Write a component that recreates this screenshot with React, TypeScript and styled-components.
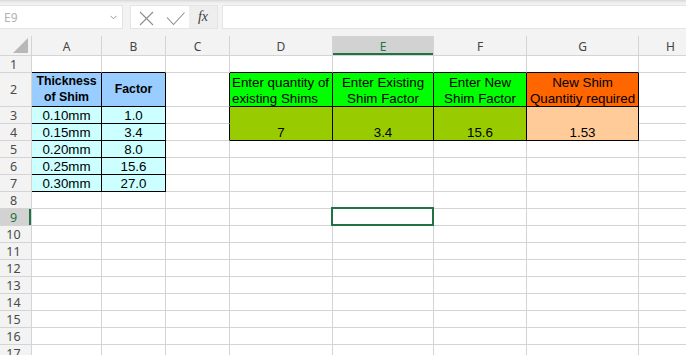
import React from 'react';
import styled, { createGlobalStyle } from 'styled-components';

const Global = createGlobalStyle`
  html, body { margin: 0; padding: 0; background: #ffffff; }
  body { width: 686px; height: 355px; overflow: hidden; }
  #root { width: 686px; height: 355px; }
`;

const GREEN = '#217346';
const GRID = '#d4d4d4';
const HEAD_BG = '#f3f3f3';

const Window = styled.div`
  width: 686px;
  height: 355px;
  overflow: hidden;
  background: ${HEAD_BG};
  display: flex;
  flex-direction: column;
`;

const FormulaBar = styled.div`
  flex: none;
  height: 36px;
  box-sizing: border-box;
  padding-top: 5px;
  display: flex;
  align-items: flex-start;
  background: linear-gradient(#d6d6d6 0px, #ebebeb 2px, ${HEAD_BG} 4px, ${HEAD_BG} 100%);
`;

const NameBox = styled.div`
  width: 123px;
  height: 24px;
  box-sizing: border-box;
  background: #ffffff;
  border: 1px solid #e4e4e4;
  border-left: none;
  display: flex;
  align-items: center;
  justify-content: space-between;
  padding: 0 5px 0 4px;
  font-family: 'Noto Sans', 'Liberation Sans', sans-serif;
  font-size: 12px;
  color: #b3b3b3;
`;

const FuncBox = styled.div`
  margin-left: 7px;
  width: 88px;
  height: 24px;
  box-sizing: border-box;
  border: 1px solid #e4e4e4;
  display: flex;
`;

const FuncIcons = styled.div`
  width: 58px;
  height: 100%;
  background: #ffffff;
  display: flex;
  align-items: center;
`;

const FxButton = styled.div`
  flex: 1;
  background: #eeeeee;
  display: flex;
  align-items: center;
  justify-content: center;
  font-family: 'Liberation Serif', 'DejaVu Serif', serif;
  font-style: italic;
  font-size: 14px;
  color: #3c3c3c;
`;

const FormulaInput = styled.div`
  margin-left: 4px;
  flex: 1;
  height: 24px;
  box-sizing: border-box;
  background: #ffffff;
  border: 1px solid #e4e4e4;
  border-right: none;
`;

const Sheet = styled.div`
  flex: none;
  display: grid;
  width: max-content;
  grid-template-columns: 32px 70px 64px 64px 103px 101px 93px 112px 64px;
  grid-template-rows: 20px 17px 34px repeat(15, 17px);
  background: #ffffff;
`;

const Corner = styled.div`
  grid-column: 1;
  grid-row: 1;
  background: ${HEAD_BG};
  border-right: 1px solid ${GRID};
  border-bottom: 1px solid ${GRID};
  box-sizing: border-box;
  display: flex;
  align-items: flex-end;
  justify-content: flex-end;
  padding: 0 3px 2px 0;
`;

const Triangle = styled.div`
  width: 0;
  height: 0;
  border-left: 15px solid transparent;
  border-bottom: 15px solid #b8b8b8;
`;

const ColHead = styled.div<{ $col: number; $active?: boolean }>`
  grid-column: ${(p) => p.$col};
  grid-row: 1;
  box-sizing: border-box;
  background: ${(p) => (p.$active ? '#d2d2d2' : HEAD_BG)};
  border-right: 1px solid ${GRID};
  border-bottom: 1px solid ${GRID};
  box-shadow: ${(p) => (p.$active ? `inset 0 -2px 0 ${GREEN}` : 'none')};
  display: flex;
  align-items: center;
  justify-content: center;
  font-family: 'Noto Sans', 'Liberation Sans', sans-serif;
  font-size: 12px;
  padding-top: 1px;
  color: ${(p) => (p.$active ? GREEN : '#444444')};
`;

const RowHead = styled.div<{ $row: number; $active?: boolean }>`
  grid-column: 1;
  grid-row: ${(p) => p.$row};
  box-sizing: border-box;
  background: ${(p) => (p.$active ? '#d2d2d2' : HEAD_BG)};
  border-right: 1px solid ${GRID};
  border-bottom: 1px solid ${GRID};
  box-shadow: ${(p) => (p.$active ? `inset -2px 0 0 ${GREEN}` : 'none')};
  display: flex;
  align-items: center;
  justify-content: center;
  padding-right: 4px;
  font-family: 'Noto Sans', 'Liberation Sans', sans-serif;
  font-size: 12.5px;
  color: ${(p) => (p.$active ? GREEN : '#4a4a4a')};
`;

const Cell = styled.div<{
  $col: number;
  $row: number;
  $span: number;
  $bg: string;
  $rb: string;
  $bb: string;
  $bold?: boolean;
  $align: 'left' | 'center';
  $valign: 'bottom' | 'middle';
}>`
  position: relative;
  grid-column: ${(p) => p.$col};
  grid-row: ${(p) => p.$row} / span ${(p) => p.$span};
  box-sizing: border-box;
  background: ${(p) => p.$bg};
  border-right: 1px solid ${(p) => p.$rb};
  border-bottom: 1px solid ${(p) => p.$bb};
  display: flex;
  flex-direction: column;
  justify-content: ${(p) => (p.$valign === 'middle' ? 'center' : 'flex-end')};
  align-items: ${(p) => (p.$align === 'center' ? 'center' : 'flex-start')};
  padding: 0 2px;
  font-family: 'Liberation Sans', Arial, sans-serif;
  font-size: ${(p) => (p.$bold ? '12.3px' : '13.33px')};
  line-height: 15.33px;
  font-weight: ${(p) => (p.$bold ? 700 : 400)};
  color: #000000;
  white-space: nowrap;
`;

const Line = styled.span<{ $align: 'left' | 'center' }>`
  display: block;
  text-align: ${(p) => p.$align};
`;

const Selection = styled.div`
  position: absolute;
  left: -2px;
  top: -2px;
  right: -1px;
  bottom: -1px;
  border: 2px solid ${GREEN};
  z-index: 2;
  pointer-events: none;
`;

const COLS = ['A', 'B', 'C', 'D', 'E', 'F', 'G', 'H'];
const ROWS = Array.from({ length: 17 }, (_, i) => i + 1);

type CellData = {
  text: string;
  bg: string;
  bold?: boolean;
  align?: 'left' | 'center';
  valign?: 'bottom' | 'middle';
  span?: number;
};

const BLUE = '#99ccff';
const CYAN = '#ccffff';
const LIME = '#00ff00';
const OLIVE = '#99cc00';
const ORANGE = '#ff6600';
const PEACH = '#ffcc99';

const DATA: Record<string, CellData> = {
  A2: { text: 'Thickness\nof Shim', bg: BLUE, bold: true, valign: 'middle' },
  B2: { text: 'Factor', bg: BLUE, bold: true, valign: 'middle' },
  A3: { text: '0.10mm', bg: CYAN },
  A4: { text: '0.15mm', bg: CYAN },
  A5: { text: '0.20mm', bg: CYAN },
  A6: { text: '0.25mm', bg: CYAN },
  A7: { text: '0.30mm', bg: CYAN },
  B3: { text: '1.0', bg: CYAN },
  B4: { text: '3.4', bg: CYAN },
  B5: { text: '8.0', bg: CYAN },
  B6: { text: '15.6', bg: CYAN },
  B7: { text: '27.0', bg: CYAN },
  D2: { text: 'Enter quantity of\nexisting Shims', bg: LIME, align: 'left' },
  E2: { text: 'Enter Existing\nShim Factor', bg: LIME },
  F2: { text: 'Enter New\nShim Factor', bg: LIME },
  G2: { text: 'New Shim\nQuantitiy required', bg: ORANGE },
  D3: { text: '7', bg: OLIVE, span: 2 },
  E3: { text: '3.4', bg: OLIVE, span: 2 },
  F3: { text: '15.6', bg: OLIVE, span: 2 },
  G3: { text: '1.53', bg: PEACH, span: 2 },
};

const COVERED = new Set(['D4', 'E4', 'F4', 'G4']);

const inTable = (c: number, r: number) =>
  ((c === 0 || c === 1) && r >= 2 && r <= 7) || (c >= 3 && c <= 6 && r >= 2 && r <= 4);

const SELECTED = 'E9';

const Chevron = () => (
  <svg width="7" height="5" viewBox="0 0 7 5">
    <polyline points="0.5,0.8 3.5,3.8 6.5,0.8" fill="none" stroke="#9a9a9a" strokeWidth="1" />
  </svg>
);

const CancelEnter = () => (
  <svg width="58" height="22" viewBox="0 0 58 22">
    <g fill="none" stroke="#8e8e8e" strokeWidth="1.1">
      <line x1="9" y1="6" x2="22" y2="19" />
      <line x1="22" y1="6" x2="9" y2="19" />
      <polyline points="36,11.5 42.5,18.5 53.5,6.5" />
    </g>
  </svg>
);

export default function App() {
  const cells: React.ReactNode[] = [];
  ROWS.forEach((r) => {
    cells.push(
      <RowHead key={`rh${r}`} $row={r + 1} $active={r === 9}>
        {r}
      </RowHead>
    );
    COLS.forEach((c, ci) => {
      const id = `${c}${r}`;
      if (COVERED.has(id)) return;
      const d = DATA[id];
      const span = d?.span ?? 1;
      const lastRow = r + span - 1;
      const rb = inTable(ci, r) || inTable(ci + 1, r) ? '#000000' : GRID;
      const bb = inTable(ci, lastRow) || inTable(ci, lastRow + 1) ? '#000000' : GRID;
      const align = d?.align ?? 'center';
      cells.push(
        <Cell
          key={id}
          $col={ci + 2}
          $row={r + 1}
          $span={span}
          $bg={d?.bg ?? '#ffffff'}
          $rb={rb}
          $bb={bb}
          $bold={d?.bold}
          $align={align}
          $valign={d?.valign ?? 'bottom'}
        >
          {d?.text.split('\n').map((t, i) => (
            <Line key={i} $align={align}>
              {t}
            </Line>
          ))}
          {id === SELECTED && <Selection />}
        </Cell>
      );
    });
  });

  return (
    <Window>
      <Global />
      <FormulaBar>
        <NameBox>
          <span>E9</span>
          <Chevron />
        </NameBox>
        <FuncBox>
          <FuncIcons>
            <CancelEnter />
          </FuncIcons>
          <FxButton>fx</FxButton>
        </FuncBox>
        <FormulaInput />
      </FormulaBar>
      <Sheet>
        <Corner>
          <Triangle />
        </Corner>
        {COLS.map((c, i) => (
          <ColHead key={c} $col={i + 2} $active={c === 'E'}>
            {c}
          </ColHead>
        ))}
        {cells}
      </Sheet>
    </Window>
  );
}
